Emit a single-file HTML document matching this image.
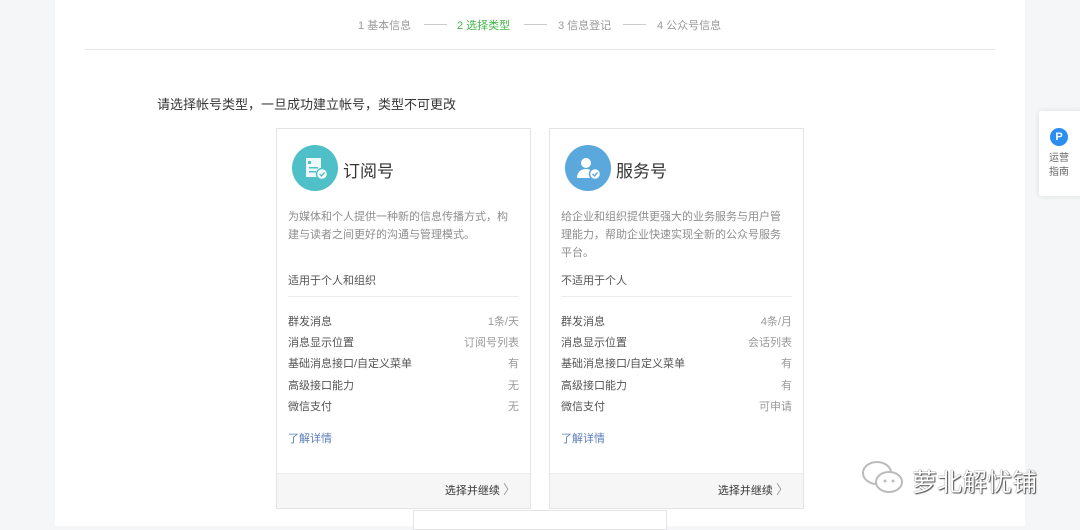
<!DOCTYPE html>
<html><head><meta charset="utf-8"><style>
*{margin:0;padding:0;box-sizing:border-box}
body{width:1080px;height:526px;overflow:hidden;background:#f5f6f7;font-family:"Liberation Sans","Noto Sans CJK SC",sans-serif;position:relative;color:#353535}
.main{position:absolute;left:55px;top:0;width:970px;height:526px;background:#fff}
.abs{position:absolute;white-space:nowrap}
.steps{top:17px;font-size:11px;color:#9a9a9a}
.line{position:absolute;top:49px;left:85px;width:910px;height:1px;background:#e7e7e7}
.card{position:absolute;top:128px;width:255px;height:381px;border:1px solid #e4e4e4;background:#fff}
.card .foot{position:absolute;left:0;right:0;bottom:0;height:35px;background:#f6f6f6;border-top:1px solid #ececec}
.card .ic{position:absolute;left:15px;top:16px;width:46px;height:46px;border-radius:50%}
.card .t{position:absolute;left:66px;top:28px;font-size:17px;color:#353535}
.card .d{position:absolute;left:11px;top:79px;width:226px;font-size:11px;line-height:18px;color:#8d8d8d;white-space:normal}
.card .s{position:absolute;left:11px;top:143px;font-size:11px;color:#555}
.card .hr{position:absolute;left:11px;right:11px;top:167px;height:1px;background:#ececec}
.card .r{position:absolute;left:11px;right:11px;font-size:11px;color:#555;height:14px}
.card .r span{float:right;color:#9a9a9a}
.card .m{position:absolute;left:11px;top:301px;font-size:11px;color:#5b7db8}
.card .b{position:absolute;right:14px;bottom:10px;font-size:11px;color:#353535}
</style></head><body>
<div class="main"></div>
<div class="abs steps" style="left:358px">1 基本信息</div>
<div class="abs" style="left:424px;top:24px;width:23px;height:1px;background:#ccc"></div>
<div class="abs steps" style="left:457px;color:#44b549">2 选择类型</div>
<div class="abs" style="left:524px;top:24px;width:23px;height:1px;background:#ccc"></div>
<div class="abs steps" style="left:558px">3 信息登记</div>
<div class="abs" style="left:623px;top:24px;width:23px;height:1px;background:#ccc"></div>
<div class="abs steps" style="left:657px">4 公众号信息</div>
<div class="line"></div>
<div class="abs" style="left:157px;top:94px;font-size:13px;color:#353535">请选择帐号类型，一旦成功建立帐号，类型不可更改</div>

<div class="card" style="left:276px">
 <div class="ic" style="background:#4fc0c8"><svg width="46" height="46"><rect x="14" y="13" width="15" height="19" fill="#fff" opacity=".9"/><rect x="16" y="16" width="3" height="3" fill="#4fc0c8"/><rect x="17" y="22" width="9" height="1.5" fill="#4fc0c8"/><rect x="17" y="26" width="7" height="1.5" fill="#4fc0c8"/><circle cx="30" cy="29" r="5.5" fill="#fff" stroke="#4fc0c8" stroke-width="1.5"/><path d="M27.5 29l2 2 3-3.5" stroke="#4fc0c8" stroke-width="1.4" fill="none"/></svg></div>
 <div class="t">订阅号</div>
 <div class="d">为媒体和个人提供一种新的信息传播方式，构建与读者之间更好的沟通与管理模式。</div>
 <div class="s">适用于个人和组织</div><div class="hr"></div>
 <div class="r" style="top:184px">群发消息<span>1条/天</span></div>
 <div class="r" style="top:205px">消息显示位置<span>订阅号列表</span></div>
 <div class="r" style="top:226px">基础消息接口/自定义菜单<span>有</span></div>
 <div class="r" style="top:248px">高级接口能力<span>无</span></div>
 <div class="r" style="top:269px">微信支付<span>无</span></div>
 <div class="m">了解详情</div>
 <div class="foot"><div class="b">选择并继续 <span style="color:#999;font-size:13px">〉</span></div></div>
</div>

<div class="card" style="left:549px">
 <div class="ic" style="background:#5aa8dc"><svg width="46" height="46"><circle cx="21" cy="18" r="5" fill="#fff"/><path d="M12 33c0-6 4-9 9-9s9 3 9 9z" fill="#fff"/><circle cx="30" cy="29" r="5.5" fill="#fff" stroke="#5aa8dc" stroke-width="1.5"/><path d="M27.5 29l2 2 3-3.5" stroke="#5aa8dc" stroke-width="1.4" fill="none"/></svg></div>
 <div class="t">服务号</div>
 <div class="d">给企业和组织提供更强大的业务服务与用户管理能力，帮助企业快速实现全新的公众号服务平台。</div>
 <div class="s">不适用于个人</div><div class="hr"></div>
 <div class="r" style="top:184px">群发消息<span>4条/月</span></div>
 <div class="r" style="top:205px">消息显示位置<span>会话列表</span></div>
 <div class="r" style="top:226px">基础消息接口/自定义菜单<span>有</span></div>
 <div class="r" style="top:248px">高级接口能力<span>有</span></div>
 <div class="r" style="top:269px">微信支付<span>可申请</span></div>
 <div class="m">了解详情</div>
 <div class="foot"><div class="b">选择并继续 <span style="color:#999;font-size:13px">〉</span></div></div>
</div>

<div class="abs" style="left:413px;top:510px;width:254px;height:20px;border:1px solid #e4e4e4;background:#fff"></div>

<div class="abs" style="left:1039px;top:111px;width:45px;height:85px;background:#fff;box-shadow:0 0 6px rgba(0,0,0,.1);border-radius:2px"></div>
<div class="abs" style="left:1050px;top:128px;width:18px;height:18px;border-radius:50%;background:#2b8ef0;color:#fff;font-size:11px;font-weight:bold;text-align:center;line-height:18px">P</div>
<div class="abs" style="left:1049px;top:152px;font-size:10px;line-height:14px;color:#666">运营<br>指南</div>

<svg class="abs" style="left:860px;top:458px" width="48" height="38"><ellipse cx="17" cy="15" rx="14" ry="11" fill="none" stroke="#bbb" stroke-width="2"/><ellipse cx="29" cy="24" rx="13" ry="10" fill="#fff" stroke="#bbb" stroke-width="2"/><circle cx="25" cy="23" r="1.5" fill="#bbb"/><circle cx="33" cy="23" r="1.5" fill="#bbb"/></svg>
<div class="abs" style="left:912px;top:463px;font-size:25px;color:#fff;text-shadow:0 0 1px #333,1px 1px 1px #555">萝北解忧铺</div>
</body></html>
